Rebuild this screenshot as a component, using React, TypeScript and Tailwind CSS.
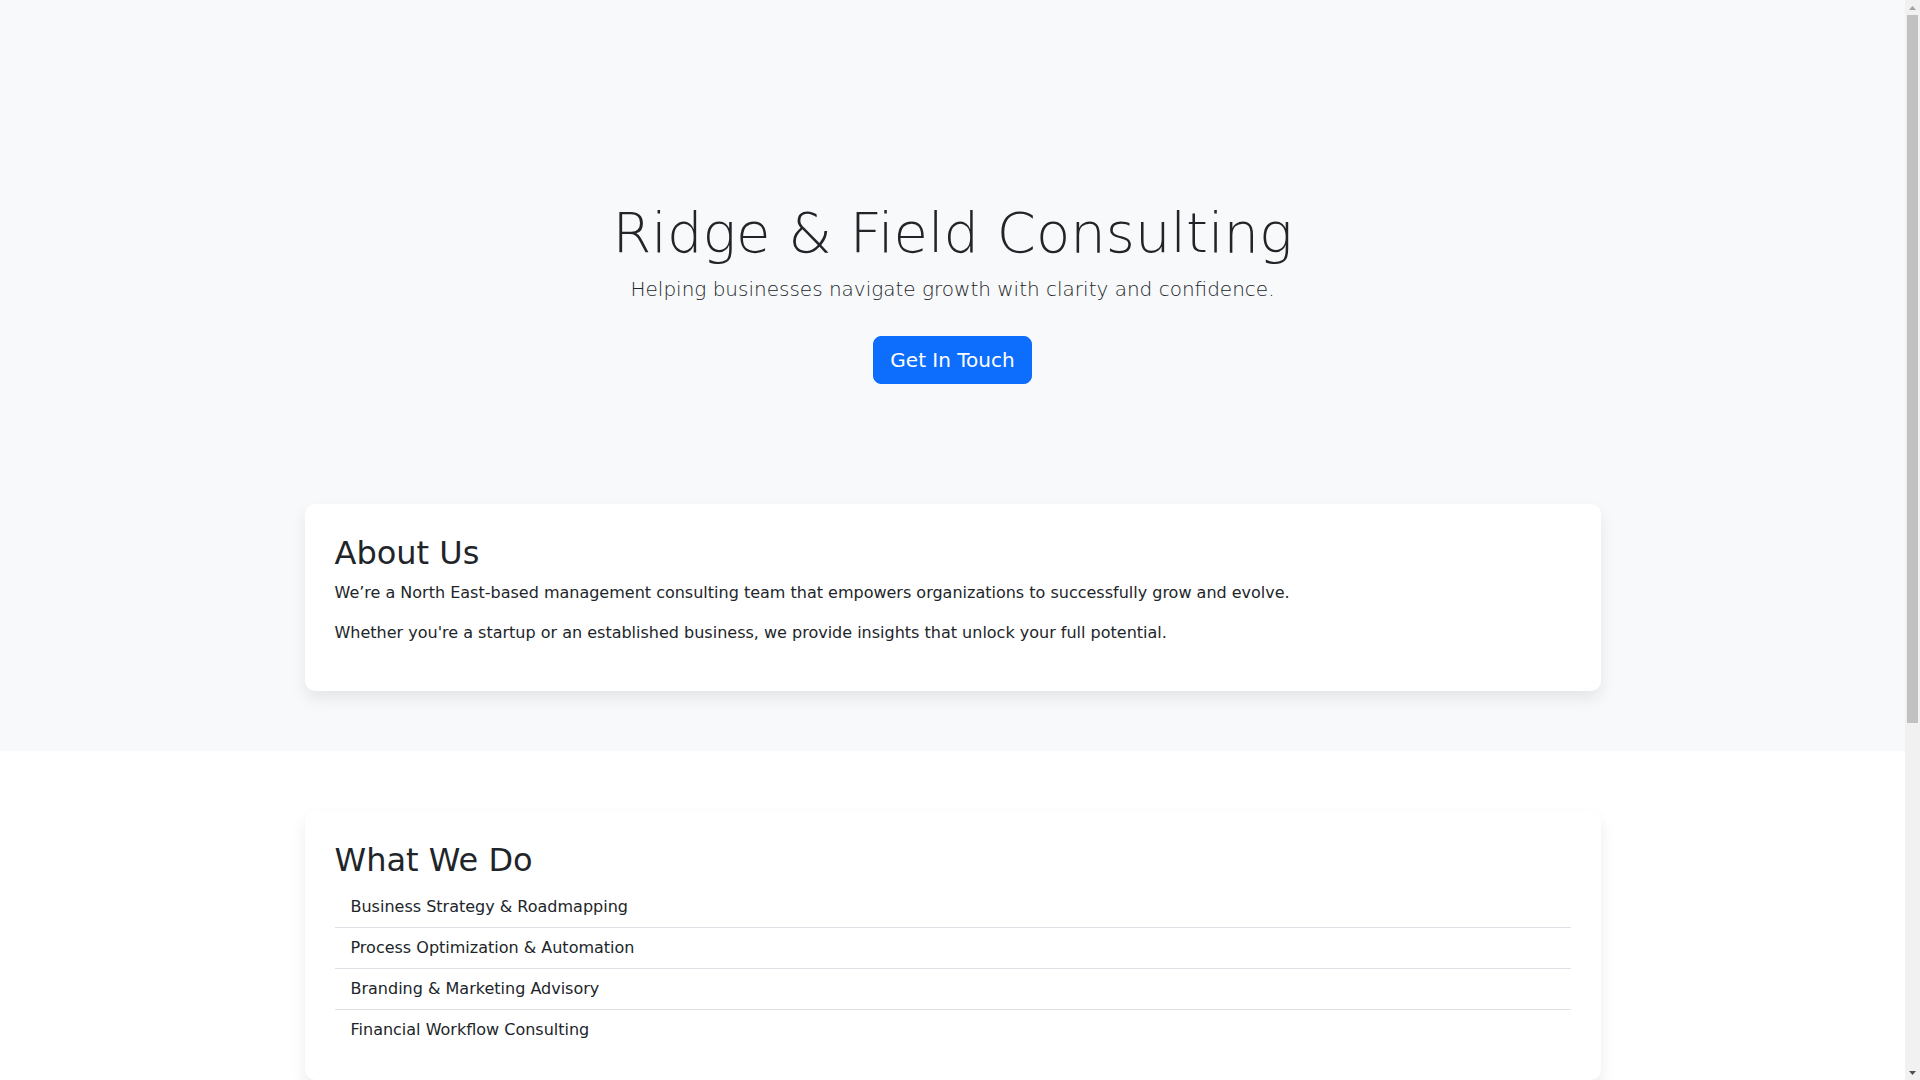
import React from 'react';

const SERVICES = [
  'Business Strategy & Roadmapping',
  'Process Optimization & Automation',
  'Branding & Marketing Advisory',
  'Financial Workflow Consulting',
];

function Card({ children }: { children: React.ReactNode }) {
  return (
    <div className="bg-white rounded-[10px] shadow-[0_0.5rem_1rem_rgba(0,0,0,0.08)] p-[30px]">{children}</div>
  );
}

// classic window scrollbar drawn beside the page
function ScrollTrack() {
  return (
    <aside className="w-[15px] shrink-0 bg-[#f1f1f1] flex flex-col items-center">
      <div className="h-[15px] flex items-center justify-center">
        <svg width="7" height="4" viewBox="0 0 7 4">
          <path d="M3.5 0L7 4H0z" fill="#a3a3a3" />
        </svg>
      </div>
      <div className="w-[11px] h-[708px] bg-[#c1c1c1]" />
      <div className="flex-1" />
      <div className="h-[15px] flex items-center justify-center">
        <svg width="7" height="4" viewBox="0 0 7 4">
          <path d="M0 0H7L3.5 4z" fill="#505050" />
        </svg>
      </div>
    </aside>
  );
}

export default function App() {
  return (
    <div className="h-screen flex text-[#212529] font-['DejaVu_Sans','Noto_Sans',sans-serif] text-base leading-[1.5]">
      <main className="flex-1 overflow-y-auto bg-white">
        {/* Hero */}
        <header className="bg-[#f8f9fa] text-center pt-[199px] pb-[60px]">
          <h1 className="text-[56px] font-light leading-[1.2] mb-2">Ridge &amp; Field Consulting</h1>
          <p className="text-[20px] font-light leading-[1.5] mb-8">
            Helping businesses navigate growth with clarity and confidence.
          </p>
          <a
            href="#contact"
            className="inline-block bg-[#0d6efd] border border-[#0d6efd] text-white text-[20px] leading-[1.5] px-4 py-2 rounded-lg"
          >
            Get In Touch
          </a>
        </header>

        {/* About */}
        <section className="bg-[#f8f9fa] py-[60px]">
          <div className="max-w-[1320px] mx-auto px-3">
            <Card>
              <h2 className="text-[32px] leading-[1.2] font-medium mb-2">About Us</h2>
              <p className="mb-4">
                We’re a North East-based management consulting team that empowers organizations to successfully grow and
                evolve.
              </p>
              <p className="mb-4">
                Whether you're a startup or an established business, we provide insights that unlock your full potential.
              </p>
            </Card>
          </div>
        </section>

        {/* Services */}
        <section className="bg-white py-[60px]">
          <div className="max-w-[1320px] mx-auto px-3">
            <Card>
              <h2 className="text-[32px] leading-[1.2] font-medium mb-2">What We Do</h2>
              <ul>
                {SERVICES.map((s) => (
                  <li key={s} className="px-4 py-2 border-b border-[#dee2e6] last:border-b-0">
                    {s}
                  </li>
                ))}
              </ul>
            </Card>
          </div>
        </section>

        {/* Contact */}
        <section id="contact" className="bg-[#f8f9fa] py-[60px]">
          <div className="max-w-[1320px] mx-auto px-3">
            <Card>
              <h2 className="text-[32px] leading-[1.2] font-medium mb-2">Contact</h2>
              <p className="mb-4">Ready to take the next step? Reach out and let's talk about your goals.</p>
              <p className="mb-4">Email: hello@ridgeandfield.com</p>
              <a
                href="mailto:hello@ridgeandfield.com"
                className="inline-block bg-[#0d6efd] text-white px-3 py-1.5 rounded-md"
              >
                Send a Message
              </a>
            </Card>
          </div>
        </section>

        <footer className="bg-[#212529] text-white/70 text-center text-sm py-6">
          © 2025 Ridge &amp; Field Consulting
        </footer>
      </main>
      <ScrollTrack />
    </div>
  );
}
